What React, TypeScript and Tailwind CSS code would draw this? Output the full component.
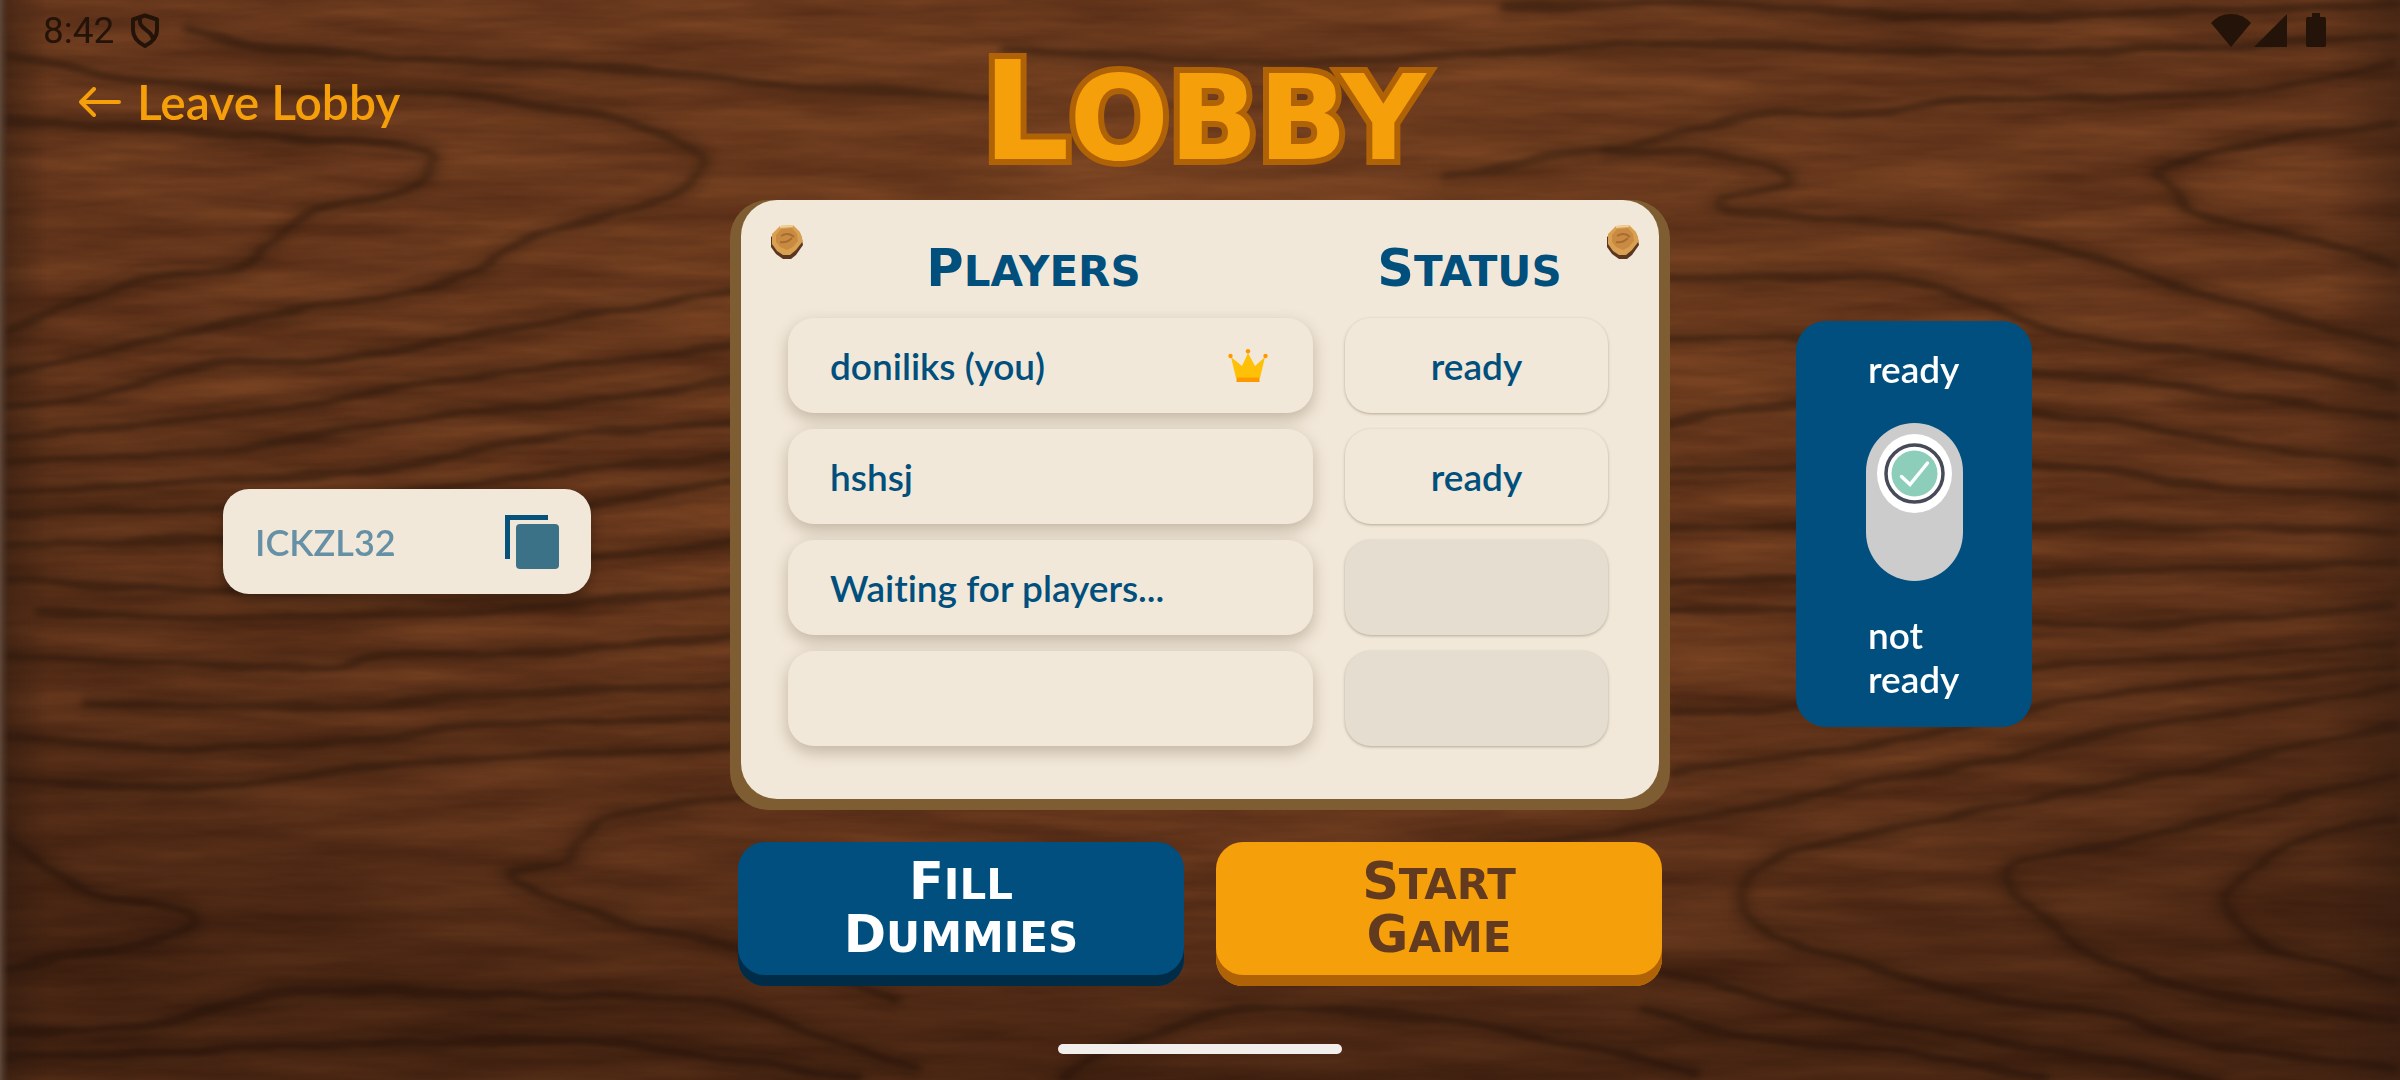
import { useState } from 'react'

type Player = { name: string; host?: boolean; status: string }

const players: Player[] = [
  { name: 'doniliks (you)', host: true, status: 'ready' },
  { name: 'hshsj', status: 'ready' },
  { name: 'Waiting for players...', status: '' },
  { name: '', status: '' },
]

// grain lines of the wooden table, as x,y pairs
const veins: number[][] = [
  [184, 28, 242, 44, 412, 59, 630, 69, 760, 83, 1000, 98],
  [0, 55, 121, 77, 242, 89, 436, 93, 582, 111, 679, 142, 703, 170, 654, 202, 533, 237, 436, 285, 242, 320, 0, 375],
  [0, 119, 194, 132, 407, 146, 431, 170, 397, 194, 315, 210, 286, 229, 242, 265, 136, 281, 0, 332],
  [740, 291, 533, 324, 349, 358, 208, 364, 97, 395, 0, 407],
  [740, 346, 485, 375, 291, 407, 0, 439],
  [740, 381, 582, 401, 388, 423, 242, 447, 0, 462],
  [740, 423, 533, 439, 339, 474, 0, 490],
  [740, 457, 582, 470, 339, 500, 0, 515],
  [740, 480, 630, 498, 400, 530, 0, 545],
  [740, 540, 560, 560, 300, 590, 0, 580],
  [37, 613, 184, 617, 436, 613, 740, 590],
  [0, 657, 138, 662, 321, 668, 381, 655, 551, 652, 740, 634],
  [83, 703, 321, 707, 459, 697, 740, 685],
  [0, 737, 184, 748, 344, 742, 505, 725, 740, 718],
  [0, 778, 207, 788, 298, 775, 459, 760, 740, 746],
  [0, 827, 32, 860, 101, 895, 174, 908, 193, 923, 151, 940, 0, 970],
  [760, 795, 620, 813, 583, 837, 565, 860, 510, 877, 574, 907, 643, 927, 720, 943, 900, 1000],
  [0, 1033, 151, 1025, 275, 993, 367, 992, 551, 995, 720, 1002, 800, 1030, 920, 1070],
  [0, 1058, 275, 1047, 574, 1040, 720, 1057, 860, 1080],
  [1060, 1080, 1107, 1050, 1207, 1017, 1282, 1008, 1439, 1020, 1564, 1043, 1700, 1074],
  [1480, 850, 1551, 840, 1640, 828, 1834, 790, 2028, 754, 2125, 729, 2400, 687],
  [1669, 775, 1785, 756, 1931, 733, 2100, 695, 2400, 665],
  [1669, 713, 1800, 706, 2037, 668, 2173, 658, 2400, 645],
  [2400, 725, 2222, 763, 2052, 796, 1955, 817, 1824, 844, 1766, 863, 1742, 893, 1761, 928, 1834, 955, 1979, 997, 2100, 1012, 2222, 1046, 2400, 1069],
  [2400, 773, 2270, 805, 2125, 840, 2018, 863, 2013, 893, 2052, 924, 2105, 962, 2212, 993, 2400, 1020],
  [2400, 817, 2309, 836, 2241, 878, 2227, 905, 2270, 947, 2400, 981],
  [1640, 966, 1761, 997, 1882, 1023, 2076, 1054, 2222, 1084],
  [1640, 1008, 1761, 1039, 1900, 1050, 2050, 1080],
  [1000, 50, 1300, 62, 1700, 43, 1923, 53, 2191, 48, 2400, 34],
  [1500, 8, 1700, 3, 1923, 17, 2191, 12, 2400, 3],
  [1440, 176, 1600, 150, 1700, 128, 1758, 115, 1879, 112, 1968, 100, 2236, 92, 2400, 60],
  [1600, 150, 1700, 153, 1767, 167, 1785, 183, 1722, 198, 1745, 213, 1923, 225, 2057, 248, 2213, 297, 2400, 347],
  [2400, 123, 2258, 143, 2164, 167, 2164, 180, 2204, 217, 2303, 237, 2400, 267],
  [1660, 277, 1879, 278, 1968, 297, 2048, 328, 2124, 343, 2236, 357, 2400, 387],
  [1660, 338, 1796, 338, 2035, 372, 2169, 385, 2400, 417],
  [1660, 425, 1800, 405, 2039, 413, 2236, 443, 2400, 463],
  [1660, 470, 2039, 466, 2200, 485, 2400, 497],
  [1660, 527, 2040, 525, 2400, 532],
  [1660, 583, 2040, 572, 2200, 570, 2400, 560],
  [1660, 608, 1900, 612, 2100, 626, 2400, 606],
]

function veinPath(p: number[]) {
  let d = `M${p[0]} ${p[1]}`
  for (let i = 0; i < p.length - 2; i += 2) {
    const a = Math.max(i - 2, 0)
    const b = Math.min(i + 4, p.length - 2)
    const c1x = p[i] + (p[i + 2] - p[a]) / 6
    const c1y = p[i + 1] + (p[i + 3] - p[a + 1]) / 6
    const c2x = p[i + 2] - (p[b] - p[i]) / 6
    const c2y = p[i + 3] - (p[b + 1] - p[i + 1]) / 6
    d += `C${c1x} ${c1y} ${c2x} ${c2y} ${p[i + 2]} ${p[i + 3]}`
  }
  return d
}

function WoodBackground() {
  return (
    <svg className="absolute inset-0 -z-10 h-full w-full" viewBox="0 0 2400 1080" preserveAspectRatio="none" aria-hidden="true">
      <defs>
        <filter id="grain" x="0" y="0" width="100%" height="100%" colorInterpolationFilters="sRGB">
          <feTurbulence type="fractalNoise" baseFrequency="0.005 0.045" numOctaves="4" seed="7" />
          <feColorMatrix values="0.23 0 0 0 0.285  0.15 0 0 0 0.14  0.08 0 0 0 0.07  0 0 0 0 1" />
        </filter>
        <filter id="vein" x="-5%" y="-5%" width="110%" height="110%" colorInterpolationFilters="sRGB">
          <feTurbulence type="fractalNoise" baseFrequency="0.012 0.05" numOctaves="2" seed="3" />
          <feDisplacementMap in="SourceGraphic" scale="10" xChannelSelector="R" yChannelSelector="G" />
          <feGaussianBlur stdDeviation="4 2" />
        </filter>
        <radialGradient id="shade" cx="0.52" cy="0.2" r="0.8">
          <stop offset="0" stopColor="#a8642f" stopOpacity="0.2" />
          <stop offset="0.5" stopColor="#6b3a1e" stopOpacity="0.05" />
          <stop offset="1" stopColor="#1e0d06" stopOpacity="0.42" />
        </radialGradient>
        <linearGradient id="edge">
          <stop offset="0" stopColor="#5f483a" />
          <stop offset="0.004" stopColor="#2b180e" stopOpacity="0.4" />
          <stop offset="0.02" stopColor="#2b180e" stopOpacity="0" />
          <stop offset="0.97" stopColor="#2b180e" stopOpacity="0" />
          <stop offset="1" stopColor="#2b180e" stopOpacity="0.4" />
        </linearGradient>
      </defs>
      <rect width="2400" height="1080" fill="#65361c" />
      <rect width="2400" height="1080" filter="url(#grain)" />
      <g filter="url(#vein)" fill="none" stroke="#2a180d">
        {veins.map((v, i) => (
          <g key={i}>
            <path d={veinPath(v)} strokeWidth="28" opacity="0.16" />
            <path d={veinPath(v)} strokeWidth="8" opacity="0.55" />
          </g>
        ))}
      </g>
      <rect width="2400" height="1080" fill="url(#shade)" />
      <rect width="2400" height="1080" fill="url(#edge)" />
    </svg>
  )
}

function StatusBar() {
  return (
    <header className="flex h-16 items-start justify-between pl-[43px] pr-[74px] pt-[9px] text-[#241308]">
      <div className="flex items-center gap-4">
        <span className="font-[Roboto,sans-serif] text-[37px] font-normal leading-[44px]">8:42</span>
        <svg width="30" height="36" viewBox="0 0 30 36" fill="none" stroke="currentColor" strokeWidth="4" aria-hidden="true">
          <path d="M15 2.500 27 6.500V17c0 7-5 12.500-12 16C8 29.500 3 24 3 17V6.500Z" strokeLinejoin="round" />
          <path d="M10 4v5c0 7 13 9 13 18" />
        </svg>
      </div>
      <div className="flex h-[42px] items-center" aria-hidden="true">
        <svg width="40" height="33" viewBox="0 0 40 33" fill="currentColor">
          <path d="M20 33 0 9Q8 0 20 0T40 9Z" />
        </svg>
        <svg className="ml-[3px]" width="33" height="33" viewBox="0 0 33 33" fill="currentColor">
          <path d="M33 0V33H0Z" />
        </svg>
        <svg className="ml-[19px]" width="20" height="34" viewBox="0 0 20 34" fill="currentColor">
          <path d="M6 0h8v4h4q2 0 2 2v26q0 2-2 2H2q-2 0-2-2V6q0-2 2-2h4Z" />
        </svg>
      </div>
    </header>
  )
}

function Nail() {
  return (
    <svg width="36" height="36" viewBox="0 0 36 36" aria-hidden="true">
      <path d="M11 5 24 4 32 11 34 21 27 31 22 35H14L7 30 2 23 2 13Z" fill="#5b3620" />
      <path d="M11 2 24 1 31 8 34 17 27 26 21 31H14L8 27 3 20 3 10Z" fill="#d9a052" />
      <path d="M12 5 23 4 28 10 29 17 24 23 18 26 11 23 7 18 7 11Z" fill="#c98b42" />
      <path d="M12 12c5-3 9-3 13 1M11 18c5 1 9-1 12-4" fill="none" stroke="#a86c30" strokeWidth="2" />
      <path d="M11 3 24 2" stroke="#f0cf98" strokeWidth="2" />
    </svg>
  )
}

function Crown() {
  return (
    <svg width="40" height="34" viewBox="0 0 40 34" role="img" aria-label="host">
      <path d="M3 8 14 17 20 4 27 17 37 8 32 29H8Z" fill="#ffc107" />
      <path d="M8.500 28.500h23V33h-23Z" fill="#ff9800" />
      <g fill="#ff9800">
        <circle cx="2.500" cy="7" r="2.200" />
        <circle cx="20" cy="2.200" r="2.200" />
        <circle cx="37.500" cy="7" r="2.200" />
      </g>
    </svg>
  )
}

function Words({ text }: { text: string }) {
  return (
    <>
      {text.split(' ').map((word) => (
        <span key={word} className="block uppercase first-letter:text-[51px]">{word}</span>
      ))}
    </>
  )
}

export default function App() {
  const [ready, setReady] = useState(true)
  const code = 'ICKZL32'

  return (
    <div className="relative isolate flex min-h-screen flex-col overflow-hidden font-[Lato,sans-serif] text-[37px] font-semibold leading-[44px] text-[#004f7c] [font-variant-ligatures:none]">
      <WoodBackground />
      <StatusBar />

      <main className="grid grow grid-cols-[1fr_auto_1fr]">
        <section className="flex flex-col items-start pl-[79px]">
          <a href="#leave" className="flex items-center gap-4 pt-2 text-[48px] leading-[60px] text-[#f59f0a]">
            <svg width="42" height="30" viewBox="0 0 42 30" fill="none" stroke="currentColor" strokeWidth="4" strokeLinecap="round" strokeLinejoin="round" aria-hidden="true">
              <path d="M40 15H2M15 2 2 15 15 28" />
            </svg>
            Leave Lobby
          </a>
          <div className="ml-36 mt-[357px] flex h-[105px] w-[368px] items-center justify-between rounded-[26px] bg-[#f2e8d9] px-8 shadow-[0_8px_14px_rgba(0,0,0,0.3)]">
            <input aria-label="Lobby code" readOnly value={code} className="w-[200px] bg-transparent text-[36px] text-[#6690a5] outline-none" />
            <button type="button" aria-label="Copy code" onClick={() => navigator.clipboard?.writeText(code)}>
              <svg width="54" height="54" viewBox="0 0 54 54" aria-hidden="true">
                <path d="M43 2.500H2.500V44" fill="none" stroke="#06527a" strokeWidth="5" />
                <rect x="11" y="9" width="43" height="45" rx="4" fill="#3c7287" />
              </svg>
            </button>
          </div>
        </section>

        <section className="flex w-[940px] flex-col items-center">
          <h1 className="h-[136px] pl-2 font-['DejaVu_Sans',sans-serif] text-[117px] font-bold uppercase leading-[96px] text-[#f59f0a] [-webkit-text-stroke:12px_#b06206] [paint-order:stroke_fill] first-letter:text-[137px]">
            Lobby
          </h1>

          <div className="relative w-full rounded-[38px] border-x-[11px] border-b-[11px] border-[#7f5d32] bg-[#7f5d32]">
            <div className="rounded-[36px] bg-[#f2e8d9] pb-[37px] pl-[15px] pr-[19px] pt-4">
              <div className="absolute left-[28px] top-[24px]"><Nail /></div>
              <div className="absolute right-[18px] top-[24px]"><Nail /></div>
              <table className="w-full table-fixed border-separate border-spacing-x-8 border-spacing-y-4">
                <thead className="font-['DejaVu_Sans',sans-serif] text-[42px] uppercase leading-[60px]">
                  <tr className="h-[70px]">
                    <th scope="col" className="p-0 pr-[34px] align-bottom">
                      <span className="block first-letter:text-[51px]">Players</span>
                    </th>
                    <th scope="col" className="w-[263px] p-0 pr-[14px] align-bottom">
                      <span className="block first-letter:text-[51px]">Status</span>
                    </th>
                  </tr>
                </thead>
                <tbody>
                  {players.map((player, i) => (
                    <tr key={i} className="h-[95px]">
                      <td className="rounded-[26px] bg-[#f2e8d9] py-0 pl-[42px] pr-[45px] shadow-[0_6px_16px_rgba(70,50,20,0.28)]">
                        <div className="flex items-center justify-between">
                          {player.name}
                          {player.host && <Crown />}
                        </div>
                      </td>
                      <td className={`rounded-[26px] p-0 text-center shadow-[0_1px_3px_rgba(70,50,20,0.35)] ${player.status ? 'bg-[#f2e8d9]' : 'bg-[#e4ddd0]'}`}>
                        {player.status}
                      </td>
                    </tr>
                  ))}
                </tbody>
              </table>
            </div>
          </div>

          <div className="mt-8 flex w-full gap-8 px-2 font-['DejaVu_Sans',sans-serif] text-[42px] font-bold leading-[50px]">
            <button type="button" className="h-[144px] grow basis-0 rounded-[27px] bg-[#004f7f] pb-2 text-white shadow-[inset_0_-11px_0_#002c47]">
              <Words text="Fill Dummies" />
            </button>
            <button type="button" className="h-[144px] grow basis-0 rounded-[27px] bg-[#f59f0a] pb-2 text-[#613a20] shadow-[inset_0_-11px_0_#b06206]">
              <Words text="Start Game" />
            </button>
          </div>
        </section>

        <section className="pl-[126px] pt-[257px]">
          <label className="flex h-[406px] w-[236px] flex-col items-center rounded-[30px] bg-[#004f7f] pt-[26px] text-white">
            <span className="w-[92px]">ready</span>
            <input type="checkbox" role="switch" className="sr-only" checked={ready} onChange={(e) => setReady(e.target.checked)} />
            <span className={`mt-8 flex h-[158px] w-[97px] justify-center rounded-full bg-[#cccccc] py-[11px] ${ready ? 'items-start' : 'items-end'}`}>
              <svg width="75" height="79" viewBox="0 0 75 79" aria-hidden="true">
                <ellipse cx="37.500" cy="39.500" rx="37.500" ry="39.500" fill="#fff" />
                <circle cx="37.500" cy="39.500" r="28.500" fill="none" stroke="#474b59" strokeWidth="3.500" />
                <circle cx="37.500" cy="39.500" r="23" fill={ready ? '#8cceb9' : '#cccccc'} />
                {ready && <path d="M24.500 42.500 33 50.500 50.500 29" fill="none" stroke="#fff" strokeWidth="3.500" strokeLinecap="round" />}
              </svg>
            </span>
            <span className="mt-8 w-[92px]">not ready</span>
          </label>
        </section>
      </main>

      <div className="absolute bottom-[26px] left-1/2 h-[10px] w-[284px] -translate-x-1/2 rounded-full bg-[#f2eeeb]" />
    </div>
  )
}
